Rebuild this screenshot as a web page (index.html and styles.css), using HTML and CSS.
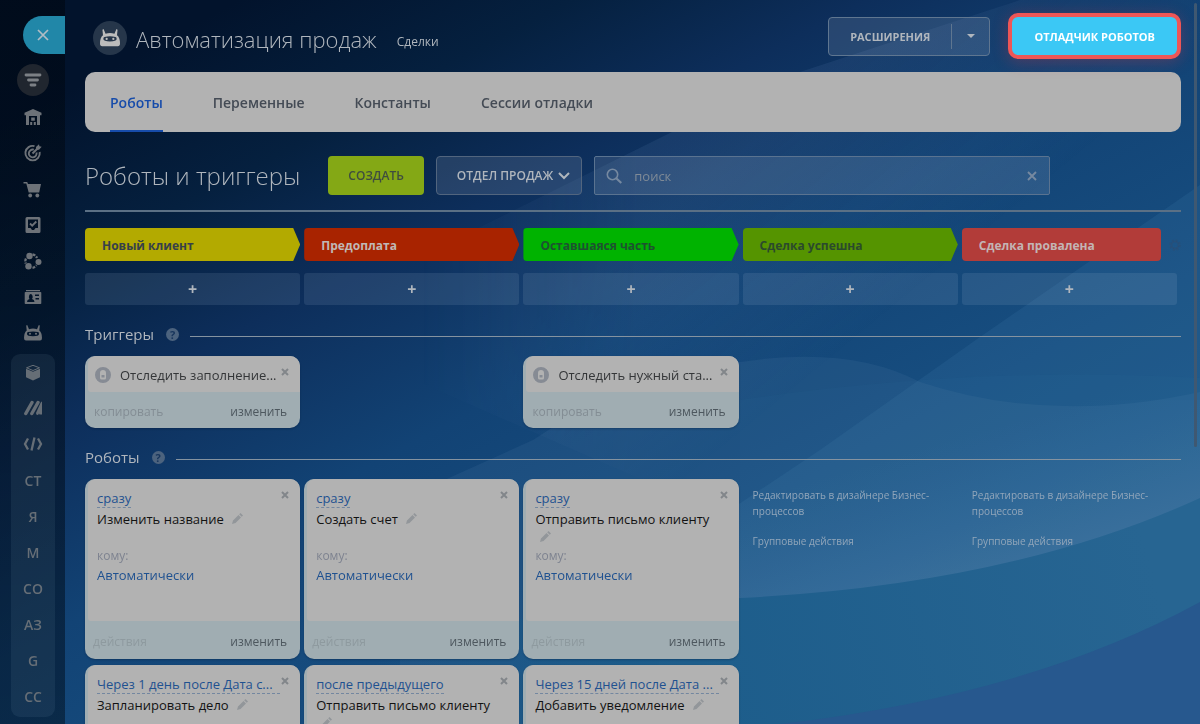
FILE: index.html
```html
<!DOCTYPE html>
<html lang="ru">
<head>
<meta charset="utf-8">
<meta name="viewport" content="width=device-width, initial-scale=1">
<title>Автоматизация продаж</title>
<link rel="stylesheet" href="styles.css">
</head>
<body>
<svg class="backdrop" viewBox="0 0 1200 724" preserveAspectRatio="none" aria-hidden="true">
  <defs>
    <linearGradient id="sky" gradientUnits="userSpaceOnUse" x1="240" y1="0" x2="640" y2="760">
      <stop offset="0" stop-color="#02132c"/>
      <stop offset=".18" stop-color="#05203f"/>
      <stop offset=".34" stop-color="#0d2e5b"/>
      <stop offset=".55" stop-color="#124375"/>
      <stop offset=".8" stop-color="#174e80"/>
      <stop offset="1" stop-color="#1a5788"/>
    </linearGradient>
    <linearGradient id="glow" gradientUnits="userSpaceOnUse" x1="980" y1="430" x2="1020" y2="565">
      <stop offset="0" stop-color="#5b8fc0" stop-opacity="0"/>
      <stop offset="1" stop-color="#8fa9c9" stop-opacity=".16"/>
    </linearGradient>
    <linearGradient id="sea" gradientUnits="userSpaceOnUse" x1="400" y1="760" x2="1150" y2="560">
      <stop offset="0" stop-color="#165684" stop-opacity="0"/>
      <stop offset=".4" stop-color="#1d5d8b"/>
      <stop offset="1" stop-color="#276592"/>
    </linearGradient>
    <linearGradient id="beam" gradientUnits="userSpaceOnUse" x1="620" y1="250" x2="760" y2="420">
      <stop offset="0" stop-color="#6b8fc0" stop-opacity=".12"/>
      <stop offset="1" stop-color="#6b8fc0" stop-opacity="0"/>
    </linearGradient>
    <linearGradient id="beamfade" gradientUnits="userSpaceOnUse" x1="420" y1="0" x2="640" y2="0">
      <stop offset="0" stop-color="#000"/>
      <stop offset="1" stop-color="#fff"/>
    </linearGradient>
    <mask id="fade"><rect width="1200" height="724" fill="url(#beamfade)"/></mask>
  </defs>
  <rect width="1200" height="724" fill="url(#sky)"/>
  <path d="M1020 0 800 72 670 133 430 252 300 330 1200 724V0z" fill="url(#beam)" mask="url(#fade)"/>
  <path d="M1200 185 980 337 820 450 700 530 640 724H1200z" fill="#4d86b5" fill-opacity=".15"/>
  <path d="M400 500 533 440Q620 380 740 362 850 345 920 382 1050 425 1200 392V724H400z" fill="#5f8cb8" fill-opacity=".12"/>
  <path d="M740 400Q980 365 1200 378V500Q1030 585 740 600z" fill="#3f8db8" fill-opacity=".05"/>
  <path d="M600 400H1200V500Q1030 585 740 600H600z" fill="url(#glow)"/>
  <path d="M300 640Q600 612 740 598 1010 585 1200 498V724H300z" fill="url(#sea)"/>
  <path d="M780 724Q1030 695 1200 602V724z" fill="#27588e"/>
</svg>

<div class="app">
  <aside class="sidebar">
    <button class="slider-close" aria-label="Закрыть"><svg width="12" height="12" viewBox="0 0 12 12"><path d="M1 1l10 10M11 1L1 11" fill="none" stroke="currentColor" stroke-width="1.7"/></svg></button>
    <nav class="side-nav" aria-label="Меню">
      <a class="side-item side-item-active" href="#" aria-label="Фильтр"><svg width="18" height="16" viewBox="0 0 18 16"><path d="M2 3h14M4.500 8h9M7 13h4" fill="none" stroke="currentColor" stroke-width="2.800" stroke-linecap="round"/></svg></a>
      <a class="side-item" href="#" aria-label="Склад"><svg width="18" height="18" viewBox="0 0 18 18"><path fill-rule="evenodd" d="M9 1l8.500 3.800v2.400H16V17H2V7.200H.5V4.800zM5 8v9h1.200v-3h2v3h1.600v-3h2v3H13V8zM7.200 9.500h3.600v3.300H7.200z" fill="currentColor"/></svg></a>
      <a class="side-item" href="#" aria-label="Цели"><svg width="18" height="18" viewBox="0 0 18 18"><g fill="none" stroke="currentColor" stroke-width="1.900"><path d="M10.500 2.200A7.200 7.200 0 1 0 15.700 8"/><path d="M9.800 5.700A3.900 3.900 0 1 0 12.500 8.500"/><path d="M8.500 9.500l5-5"/></g><path d="M12 3l3-2.700.4 2 2.300.5-2.700 3-2.800.2z" fill="currentColor"/></svg></a>
      <a class="side-item" href="#" aria-label="Магазин"><svg width="19" height="18" viewBox="0 0 19 18"><path d="M.5 2h3.700L5 4h13l-1.800 8.500H5.700L3.300 3.500H.5z" fill="currentColor"/><circle cx="7.200" cy="15.500" r="1.900" fill="currentColor"/><circle cx="14.300" cy="15.500" r="1.900" fill="currentColor"/></svg></a>
      <a class="side-item" href="#" aria-label="Задачи"><svg width="18" height="18" viewBox="0 0 18 18"><path fill-rule="evenodd" d="M3 1h12a1.500 1.500 0 0 1 1.500 1.500v13A1.500 1.500 0 0 1 15 17H3a1.500 1.500 0 0 1-1.500-1.500v-13A1.500 1.500 0 0 1 3 1zM4 3.500V12h2.500l1.500 2h2l1.500-2H14V3.500z" fill="currentColor"/><path d="M6 7.500l2.200 2.200L12.300 5.500" fill="none" stroke="currentColor" stroke-width="1.800"/></svg></a>
      <a class="side-item" href="#" aria-label="Процессы"><svg width="19" height="18" viewBox="0 0 19 18"><circle cx="6.500" cy="4" r="3.200" fill="currentColor"/><circle cx="5.500" cy="14.300" r="3.200" fill="currentColor"/><circle cx="15.500" cy="10" r="3" fill="currentColor"/><path d="M9.500 2.500q3 .5 4.500 3.500M3 6.500q-1.200 2.500-.2 5M9.500 15.800q2-.3 4-2.600" fill="none" stroke="currentColor" stroke-width="2.300" stroke-dasharray="3 1.200"/></svg></a>
      <a class="side-item" href="#" aria-label="Контакты"><svg width="18" height="16" viewBox="0 0 18 16"><path fill-rule="evenodd" d="M2 1h14v1.200H2zM1.500 3h15a.8.800 0 0 1 .8.800v10.400a.8.800 0 0 1-.8.800h-15a.8.800 0 0 1-.8-.8V3.800A.8.800 0 0 1 1.500 3zM3 13h7.500q0-2.500-2.500-3 1-1.200.6-3Q8 5 6.700 5T5 7q-.4 1.800.5 3Q3 10.500 3 13zM11 5.500v1.500h4V5.500zM11.500 9v1.500H15V9z" fill="currentColor"/></svg></a>
      <a class="side-item" href="#" aria-label="Роботы"><svg width="18" height="18" viewBox="0 0 18 18"><path fill-rule="evenodd" d="M3.200 1L5 5.200Q9 3.800 13 5.200L14.800 1l1 .5-.5 5Q18 8.500 18 14q0 2.500-2 2.500H2q-2 0-2-2.500 0-5.500 2.700-7.500l-.5-5zM4 8q-1 0-1 2 0 2.200 6 2.200T15 10q0-2-1-2-5-1.200-10 0z" fill="currentColor"/><circle cx="6" cy="9.800" r="1" fill="currentColor"/><circle cx="12" cy="9.800" r="1" fill="currentColor"/></svg></a>
      <div class="side-group">
        <a class="side-item" href="#" aria-label="Каталог"><svg width="16" height="17" viewBox="0 0 16 17"><path d="M1 4.800l7 3 7-3v8.500l-7 3.200-7-3.200z" fill="currentColor"/><path d="M1.500 3.800L8 1.300l6.500 2.500L8 6.500z" fill="none" stroke="currentColor"/></svg></a>
        <a class="side-item" href="#" aria-label="Маркетинг"><svg width="18" height="16" viewBox="0 0 18 16"><path d="M1.800 13.500L8 2.500M7.800 13.500L14 2.500" stroke="currentColor" stroke-width="3.400" stroke-linecap="round"/><path d="M12 13q0 2 1.500 2 .8 0 1.500-1.500l.5 1H18V1.500q-1 0-1.500 1.500z" fill="currentColor"/></svg></a>
        <a class="side-item" href="#" aria-label="Разработчикам"><svg width="20" height="16" viewBox="0 0 20 16"><path d="M5 2.500L2 8l3 5.500M15 2.500L18 8l-3 5.500M11.500 1.500l-3 13" fill="none" stroke="currentColor" stroke-width="2.300"/></svg></a>
        <a class="side-item" href="#">СТ</a>
        <a class="side-item" href="#">Я</a>
        <a class="side-item" href="#">М</a>
        <a class="side-item" href="#">СО</a>
        <a class="side-item" href="#">АЗ</a>
        <a class="side-item" href="#">G</a>
        <a class="side-item" href="#">СС</a>
      </div>
    </nav>
  </aside>

  <main class="page">
    <header class="page-header">
      <span class="page-logo"><svg width="20" height="20" viewBox="0 0 18 18"><path fill-rule="evenodd" d="M3.200 1L5 5.200Q9 3.800 13 5.200L14.800 1l1 .5-.5 5Q18 8.500 18 14q0 2.500-2 2.500H2q-2 0-2-2.500 0-5.500 2.700-7.500l-.5-5zM4 8q-1 0-1 2 0 2.200 6 2.200T15 10q0-2-1-2-5-1.200-10 0z" fill="currentColor"/><circle cx="6" cy="9.800" r="1" fill="currentColor"/><circle cx="12" cy="9.800" r="1" fill="currentColor"/></svg></span>
      <h1 class="page-title">Автоматизация продаж</h1>
      <span class="page-subtitle">Сделки</span>
      <div class="header-actions">
        <div class="split">
          <button class="split-main">РАСШИРЕНИЯ</button>
          <button class="split-more" aria-label="Ещё"><svg width="8" height="4" viewBox="0 0 8 4"><path d="M0 0h8L4 4z" fill="currentColor"/></svg></button>
        </div>
        <button class="debug">ОТЛАДЧИК РОБОТОВ</button>
      </div>
    </header>

    <nav class="tabs" aria-label="Разделы">
      <a class="tab tab-active" href="#">Роботы</a>
      <a class="tab" href="#">Переменные</a>
      <a class="tab" href="#">Константы</a>
      <a class="tab" href="#">Сессии отладки</a>
    </nav>

    <div class="toolbar">
      <h2 class="toolbar-title">Роботы и триггеры</h2>
      <button class="create">СОЗДАТЬ</button>
      <button class="dept">ОТДЕЛ ПРОДАЖ <svg width="12" height="8" viewBox="0 0 12 8"><path d="M1 1l5 5 5-5" fill="none" stroke="currentColor" stroke-width="2"/></svg></button>
      <div class="search">
        <svg width="16" height="16" viewBox="0 0 16 16"><circle cx="6.500" cy="6.500" r="5.200" fill="none" stroke="currentColor" stroke-width="1.600"/><path d="M10.500 10.500l4.800 4.500" stroke="currentColor" stroke-width="2.200"/></svg>
        <input type="text" placeholder="поиск" aria-label="поиск">
        <button class="clear" aria-label="Очистить"><svg width="10" height="10" viewBox="0 0 10 10"><path d="M1 1l8 8M9 1L1 9" stroke="currentColor" stroke-width="1.900"/></svg></button>
      </div>
    </div>

    <div class="columns stages">
      <div class="stage stage-yellow">Новый клиент</div>
      <div class="stage stage-red">Предоплата</div>
      <div class="stage stage-green">Оставшаяся часть</div>
      <div class="stage stage-olive">Сделка успешна</div>
      <div class="stage-end">
        <div class="stage stage-fail">Сделка провалена</div>
        <button class="gear" aria-label="Настройки"><svg width="12" height="12" viewBox="0 0 12 12"><circle cx="6" cy="6" r="3.500" fill="none" stroke="currentColor" stroke-width="1.600"/><circle cx="6" cy="6" r="5" fill="none" stroke="currentColor" stroke-width="1.500" stroke-dasharray="2 1.927"/></svg></button>
      </div>
    </div>

    <div class="columns adders">
      <button class="add" aria-label="Добавить">+</button>
      <button class="add" aria-label="Добавить">+</button>
      <button class="add" aria-label="Добавить">+</button>
      <button class="add" aria-label="Добавить">+</button>
      <button class="add" aria-label="Добавить">+</button>
    </div>

    <div class="section"><h3>Триггеры</h3><span class="help">?</span><span class="rule"></span></div>
    <div class="columns">
      <article class="card">
        <div class="card-body trigger-body">
          <svg width="16" height="16" viewBox="0 0 16 16"><path fill-rule="evenodd" d="M8 0a8 8 0 1 1 0 16A8 8 0 0 1 8 0zm0 3Q5 3 5 6v5q0 1.500 1.500 1.500h3Q11 12.500 11 11V6q0-3-3-3zM6.500 8h3v2.500h-3z" fill="currentColor"/></svg>
          <span>Отследить заполнение...</span>
        </div>
        <button class="close" aria-label="Удалить"><svg width="8" height="8" viewBox="0 0 8 8"><path d="M1 1l6 6M7 1L1 7" stroke="currentColor" stroke-width="2"/></svg></button>
        <div class="card-foot trigger-foot"><a class="copy" href="#">копировать</a><a class="edit" href="#">изменить</a></div>
      </article>
      <div></div>
      <article class="card">
        <div class="card-body trigger-body">
          <svg width="16" height="16" viewBox="0 0 16 16"><path fill-rule="evenodd" d="M8 0a8 8 0 1 1 0 16A8 8 0 0 1 8 0zm0 3Q5 3 5 6v5q0 1.500 1.500 1.500h3Q11 12.500 11 11V6q0-3-3-3zM6.500 8h3v2.500h-3z" fill="currentColor"/></svg>
          <span>Отследить нужный ста...</span>
        </div>
        <button class="close" aria-label="Удалить"><svg width="8" height="8" viewBox="0 0 8 8"><path d="M1 1l6 6M7 1L1 7" stroke="currentColor" stroke-width="2"/></svg></button>
        <div class="card-foot trigger-foot"><a class="copy" href="#">копировать</a><a class="edit" href="#">изменить</a></div>
      </article>
    </div>

    <div class="section"><h3>Роботы</h3><span class="help">?</span><span class="rule"></span></div>
    <div class="columns robots">
      <div class="lane">
        <article class="card">
          <div class="card-body robot-body">
            <a class="when" href="#">сразу</a>
            <div class="name">Изменить название <svg class="pencil" width="11" height="11" viewBox="0 0 11 11"><path d="M0 11l1-3.500L6.500 2 9 4.500 3.500 10zM7.200 1.300L8.500 0 11 2.500 9.700 3.800z" fill="currentColor"/></svg></div>
            <div class="to">кому:</div>
            <a class="who" href="#">Автоматически</a>
          </div>
          <button class="close" aria-label="Удалить"><svg width="8" height="8" viewBox="0 0 8 8"><path d="M1 1l6 6M7 1L1 7" stroke="currentColor" stroke-width="2"/></svg></button>
          <div class="card-foot"><a class="more" href="#">действия</a><a class="edit" href="#">изменить</a></div>
        </article>
        <article class="card">
          <div class="card-body robot-body">
            <a class="when when-long" href="#">Через 1 день после Дата с...</a>
            <div class="name">Запланировать дело <svg class="pencil" width="11" height="11" viewBox="0 0 11 11"><path d="M0 11l1-3.500L6.500 2 9 4.500 3.500 10zM7.200 1.300L8.500 0 11 2.500 9.700 3.800z" fill="currentColor"/></svg></div>
          </div>
          <button class="close" aria-label="Удалить"><svg width="8" height="8" viewBox="0 0 8 8"><path d="M1 1l6 6M7 1L1 7" stroke="currentColor" stroke-width="2"/></svg></button>
        </article>
      </div>
      <div class="lane">
        <article class="card">
          <div class="card-body robot-body">
            <a class="when" href="#">сразу</a>
            <div class="name">Создать счет <svg class="pencil" width="11" height="11" viewBox="0 0 11 11"><path d="M0 11l1-3.500L6.500 2 9 4.500 3.500 10zM7.200 1.300L8.500 0 11 2.500 9.700 3.800z" fill="currentColor"/></svg></div>
            <div class="to">кому:</div>
            <a class="who" href="#">Автоматически</a>
          </div>
          <button class="close" aria-label="Удалить"><svg width="8" height="8" viewBox="0 0 8 8"><path d="M1 1l6 6M7 1L1 7" stroke="currentColor" stroke-width="2"/></svg></button>
          <div class="card-foot"><a class="more" href="#">действия</a><a class="edit" href="#">изменить</a></div>
        </article>
        <article class="card">
          <div class="card-body robot-body">
            <a class="when" href="#">после предыдущего</a>
            <div class="name">Отправить письмо клиенту <svg class="pencil" width="11" height="11" viewBox="0 0 11 11"><path d="M0 11l1-3.500L6.500 2 9 4.500 3.500 10zM7.200 1.300L8.500 0 11 2.500 9.700 3.800z" fill="currentColor"/></svg></div>
          </div>
          <button class="close" aria-label="Удалить"><svg width="8" height="8" viewBox="0 0 8 8"><path d="M1 1l6 6M7 1L1 7" stroke="currentColor" stroke-width="2"/></svg></button>
        </article>
      </div>
      <div class="lane">
        <article class="card">
          <div class="card-body robot-body">
            <a class="when" href="#">сразу</a>
            <div class="name">Отправить письмо клиенту <svg class="pencil" width="11" height="11" viewBox="0 0 11 11"><path d="M0 11l1-3.500L6.500 2 9 4.500 3.500 10zM7.200 1.300L8.500 0 11 2.500 9.700 3.800z" fill="currentColor"/></svg></div>
            <div class="to">кому:</div>
            <a class="who" href="#">Автоматически</a>
          </div>
          <button class="close" aria-label="Удалить"><svg width="8" height="8" viewBox="0 0 8 8"><path d="M1 1l6 6M7 1L1 7" stroke="currentColor" stroke-width="2"/></svg></button>
          <div class="card-foot"><a class="more" href="#">действия</a><a class="edit" href="#">изменить</a></div>
        </article>
        <article class="card">
          <div class="card-body robot-body">
            <a class="when when-long" href="#">Через 15 дней после Дата ...</a>
            <div class="name">Добавить уведомление <svg class="pencil" width="11" height="11" viewBox="0 0 11 11"><path d="M0 11l1-3.500L6.500 2 9 4.500 3.500 10zM7.200 1.300L8.500 0 11 2.500 9.700 3.800z" fill="currentColor"/></svg></div>
          </div>
          <button class="close" aria-label="Удалить"><svg width="8" height="8" viewBox="0 0 8 8"><path d="M1 1l6 6M7 1L1 7" stroke="currentColor" stroke-width="2"/></svg></button>
        </article>
      </div>
      <div class="lane lane-links">
        <a href="#">Редактировать в дизайнере Бизнес-процессов</a>
        <a href="#">Групповые действия</a>
      </div>
      <div class="lane lane-links">
        <a href="#">Редактировать в дизайнере Бизнес-процессов</a>
        <a href="#">Групповые действия</a>
      </div>
    </div>
  </main>
</div>
<div class="scroll-thumb"></div>
</body>
</html>
```
FILE: styles.css
```css
* { box-sizing: border-box; }

body {
  margin: 0;
  height: 100vh;
  overflow: hidden;
  background: #0d2e5b;
  color: #b0b6bd;
  font-family: "Open Sans", "Noto Sans", sans-serif;
  font-size: 13px;
}

a { color: inherit; text-decoration: none; }
button { margin: 0; padding: 0; border: 0; background: none; color: inherit; font: inherit; }
svg { display: block; flex: none; }
h1, h2, h3 { margin: 0; font-weight: 400; }

.backdrop { position: fixed; inset: 0; width: 100%; height: 100%; z-index: -1; }

.app { display: grid; grid-template-columns: 65px minmax(0, 1fr); height: 100vh; }

/* Sidebar */
.sidebar { display: flex; flex-direction: column; padding-top: 16px; background: linear-gradient(rgba(1, 8, 18, .6), rgba(2, 18, 34, .55)); color: #6d7278; }
.slider-close { display: flex; align-items: center; justify-content: center; align-self: flex-end; width: 42px; height: 38px; padding-right: 2px; border-radius: 19px 0 0 19px; background: #2187a8; color: #b0bcc4; }
.side-nav { display: flex; flex-direction: column; padding-top: 8px; }
.side-item { display: flex; align-items: center; justify-content: center; height: 36px; font-size: 14px; font-weight: 600; }
.side-item-active { align-self: center; width: 32px; height: 32px; margin: 2px 0 3px; border-radius: 50%; background: #20262f; color: #7c8085; }
.side-group { margin: 3px 10px 0 11px; padding: 0 0 3px; border-radius: 9px; background: rgba(140, 165, 190, .1); color: #666e76; }

/* Header */
.page { min-width: 0; padding: 0 19px 0 20px; overflow: hidden; }
.page-header { display: flex; align-items: center; height: 72px; padding-left: 8px; }
.page-logo { display: flex; align-items: center; justify-content: center; width: 34px; height: 34px; margin: 4px 9px 0 0; border-radius: 50%; background: #26364a; color: #bcbcbc; }
.page-title { margin-top: 6px; font-size: 22px; font-weight: 300; line-height: 32px; white-space: nowrap; }
.page-subtitle { margin: 10px 0 0 20px; font-size: 12px; }
.header-actions { display: flex; align-items: center; gap: 18px; margin-left: auto; font-size: 11px; font-weight: 700; }
.split { display: flex; align-items: center; height: 39px; border: 1px solid #5f7690; border-radius: 4px; background: rgba(190, 200, 220, .15); }
.split-main { height: 25px; padding: 0 21px; }
.split-more { display: flex; align-items: center; justify-content: center; width: 38px; height: 25px; border-left: 1px solid #5f7690; }
.debug { height: 46px; padding: 0 22px; border: 4px solid #ee5656; border-radius: 10px; background: #3bc8f5; box-shadow: 0 3px 16px rgba(238, 50, 60, .28); color: #fff; }

/* Tabs */
.tabs { display: flex; gap: 50px; height: 60px; padding: 0 25px; border-radius: 10px; background: #b2b2b2; color: #444b55; font-size: 14px; font-weight: 600; }
.tab { display: flex; align-items: center; padding-top: 2px; border-bottom: 2px solid transparent; }
.tab-active { border-color: #174caa; color: #174caa; }

/* Toolbar */
.toolbar { display: flex; align-items: center; gap: 12px; margin-top: 24px; padding-bottom: 15px; border-bottom: 2px solid #5b7085; font-size: 12px; font-weight: 600; }
.toolbar-title { margin-right: 16px; font-size: 24px; font-weight: 300; line-height: 36px; white-space: nowrap; }
.create { height: 39px; padding: 0 20px; border-radius: 4px; background: #84a815; color: #3f4d3f; }
.dept { display: flex; align-items: center; gap: 5px; height: 39px; padding: 0 11px 0 20px; border: 1px solid #52657e; border-radius: 4px; background: rgba(190, 200, 220, .15); white-space: nowrap; }
.search { display: flex; align-items: center; flex: 1; gap: 12px; height: 39px; margin-right: 131px; padding: 0 12px 0 11px; border: 1px solid #5a7390; border-radius: 2px; background: rgba(190, 200, 220, .15); color: #7689a0; }
.search input { flex: 1; min-width: 0; padding: 0; border: 0; outline: 0; background: none; color: #b0b6bd; font-family: inherit; font-size: 13px; }
.search input::placeholder { color: #7f8a96; opacity: 1; }

/* Five-column board */
.columns { display: grid; grid-template-columns: repeat(5, minmax(0, 1fr)); gap: 4px; padding-right: 4px; }
.stages { margin-top: 16px; }
.stage { display: flex; align-items: center; height: 33px; padding: 1px 0 0 17px; border-radius: 4px; clip-path: polygon(0 0, calc(100% - 7px) 0, 100% 50%, calc(100% - 7px) 100%, 0 100%); font-size: 12px; font-weight: 700; white-space: nowrap; }
.stage-yellow { background: #b3aa00; color: #36404a; }
.stage-red { background: #a82300; color: #c0b8b5; }
.stage-green { background: #00b300; color: #1d5230; }
.stage-olive { background: #559400; color: #2b4a2c; }
.stage-end { display: flex; align-items: center; gap: 8px; margin-right: -4px; }
.stage-fail { flex: 1; clip-path: none; background: #b23c39; color: #c3b5b5; }
.gear { color: #27507a; }
.adders { margin-top: 12px; }
.add { height: 32px; border-radius: 3px; background: rgba(170, 190, 215, .13); font-size: 16px; font-weight: 700; line-height: 28px; }

.section { display: flex; align-items: center; height: 24px; margin-top: 18px; }
.section h3 { font-size: 15px; line-height: 20px; padding-bottom: 2px; }
.help { display: flex; align-items: center; justify-content: center; width: 13px; height: 13px; margin: 0 11px 2px 12px; border-radius: 50%; background: #4c637e; color: #17355c; font-size: 11px; font-weight: 700; }
.rule { flex: 1; height: 1px; margin-top: 2px; background: #8593a0; }
.section + .columns { margin-top: 9px; }

/* Cards */
.card { position: relative; overflow: hidden; border-radius: 10px; background: #a0adb2; box-shadow: 0 1px 2px rgba(0, 20, 50, .3); }
.card-body { margin-left: 3px; border-radius: 8px 0 0 3px; background: #b2b2b2; }
.close { position: absolute; top: 12px; right: 11px; color: #82868a; }
.trigger-body { display: flex; align-items: center; gap: 9px; height: 36px; padding: 1px 0 0 7px; color: #343638; white-space: nowrap; }
.trigger-body svg { color: #868b94; }
.card-foot { display: flex; align-items: center; justify-content: space-between; height: 38px; padding: 2px 13px 0 8px; font-size: 12px; }
.trigger-foot { height: 36px; padding-left: 9px; }
.copy { color: #838d94; }
.more { color: #8e9a9f; }
.edit { color: #4d575e; }

.lane { display: flex; flex-direction: column; gap: 6px; }
.robot-body { height: 142px; padding: 10px 9px; }
.when { display: inline-block; border-bottom: 1px dashed #7387a0; color: #1f5190; line-height: 17px; white-space: nowrap; }
.when-long { display: block; margin-right: 11px; padding-top: 1px; }
.name { height: 36px; margin-top: 2px; padding-right: 8px; color: #121212; line-height: 18px; }
.pencil { display: inline-block; margin-left: 5px; color: #92969a; }
.to { color: #7e8390; font-size: 12px; line-height: 20px; }
.who { display: block; color: #1f5190; line-height: 18px; }

.lane-links { gap: 14px; padding: 8px 10px; color: #92a6ba; font-size: 10px; line-height: 16px; }

.scroll-thumb { position: fixed; top: 3px; right: 3px; width: 3px; height: 444px; border-radius: 2px; background: #3f5871; }
```
